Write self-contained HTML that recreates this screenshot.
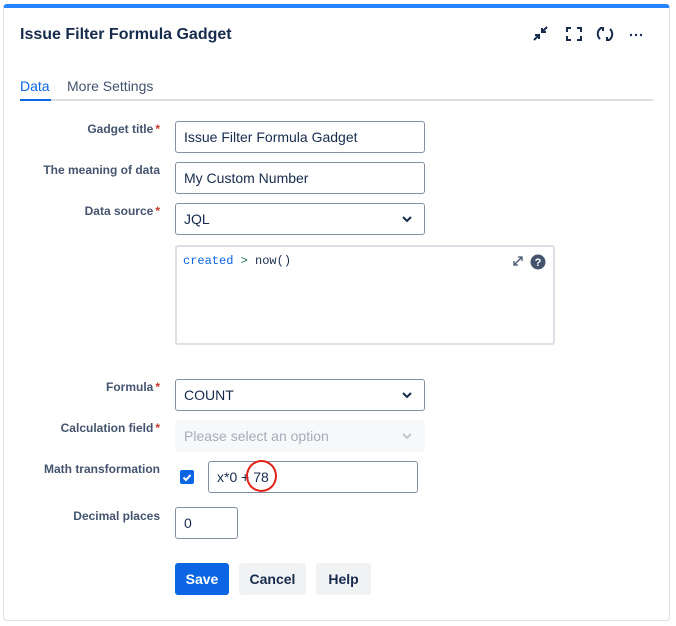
<!DOCTYPE html>
<html><head><style>
*{box-sizing:border-box;margin:0;padding:0}
body{width:676px;height:626px;background:#fff;font-family:"Liberation Sans",sans-serif;position:relative;overflow:hidden}
.card{position:absolute;left:3px;top:4px;width:667px;height:617px;border:1px solid #dcdfe4;border-top:4px solid #2684ff;border-radius:4px}
.a{position:absolute}
.title{left:20px;top:26px;font-size:16px;font-weight:bold;color:#172b4d}
.lbl{position:absolute;right:516px;font-size:12px;font-weight:bold;color:#44546f;text-align:right;white-space:nowrap}
.lbl i{font-style:normal;color:#c9372c;margin-left:2px}
.in{position:absolute;border:1px solid #8590a2;border-radius:3px;font-size:14px;color:#172b4d;padding-left:8px;display:flex;align-items:center}
.chev{position:absolute;right:12px;top:11px}
.btn{position:absolute;top:563px;height:32px;border-radius:3px;font-size:14px;font-weight:bold;display:flex;align-items:center;justify-content:center;color:#172b4d;background:#f1f2f4}
</style></head><body>
<div class="card"></div>
<div class="a title">Issue Filter Formula Gadget</div>
<svg class="a" style="left:531px;top:25px" width="120" height="18" viewBox="0 0 120 18" fill="none" stroke="#172b4d" stroke-width="2">
<path d="M3 15l5-5M4 10h4v4M16 2l-5 5M11 3v4h4"/>
<path d="M36 7V3h4M46 3h4v4M50 11v4h-4M40 15h-4v-4"/>
<path d="M70 3a7 7 0 0 0-1 11M69 3h3v3M78 15a7 7 0 0 0 1-11M79 15h-3v-3"/>
<circle cx="100" cy="10" r="1.2" fill="#172b4d" stroke="none"/><circle cx="105" cy="10" r="1.2" fill="#172b4d" stroke="none"/><circle cx="110" cy="10" r="1.2" fill="#172b4d" stroke="none"/>
</svg>
<div class="a" style="left:20px;top:78px;font-size:14px;color:#0c66e4">Data</div>
<div class="a" style="left:67px;top:78px;font-size:14px;color:#44546f">More Settings</div>
<div class="a" style="left:20px;top:99px;width:633px;height:2px;background:#dcdfe4"></div>
<div class="a" style="left:20px;top:99px;width:31px;height:2px;background:#0c66e4"></div>

<div class="lbl" style="top:122px">Gadget title<i>*</i></div>
<div class="in" style="left:175px;top:121px;width:250px;height:32px">Issue Filter Formula Gadget</div>
<div class="lbl" style="top:163px">The meaning of data</div>
<div class="in" style="left:175px;top:162px;width:250px;height:32px">My Custom Number</div>
<div class="lbl" style="top:204px">Data source<i>*</i></div>
<div class="in" style="left:175px;top:203px;width:250px;height:32px">JQL<svg class="chev" width="10" height="8"><path d="M1 2l4 4 4-4" stroke="#172b4d" stroke-width="2" fill="none"/></svg></div>
<div class="a" style="left:175px;top:245px;width:380px;height:100px;border:2px solid #dcdfe4;border-radius:3px"></div>
<div class="a" style="left:183px;top:254px;font-family:'Liberation Mono',monospace;font-size:12px;color:#172b4d"><span style="color:#0c66e4">created</span> <span style="color:#216e4e">&gt;</span> now()</div>
<svg class="a" style="left:512px;top:254px" width="36" height="16"><path d="M2 11l8-8M6 3h4v4M2 7v4h4" stroke="#44546f" stroke-width="1.3" fill="none"/><circle cx="26" cy="8" r="7.5" fill="#44546f"/><text x="26" y="12" font-size="11" font-weight="bold" fill="#fff" text-anchor="middle" font-family="Liberation Sans">?</text></svg>

<div class="lbl" style="top:380px">Formula<i>*</i></div>
<div class="in" style="left:175px;top:379px;width:250px;height:32px">COUNT<svg class="chev" width="10" height="8"><path d="M1 2l4 4 4-4" stroke="#172b4d" stroke-width="2" fill="none"/></svg></div>
<div class="lbl" style="top:421px">Calculation field<i>*</i></div>
<div class="in" style="left:175px;top:420px;width:250px;height:32px;background:#f7f8f9;border-color:#f7f8f9;color:#a5adba">Please select an option<svg class="chev" width="10" height="8"><path d="M1 2l4 4 4-4" stroke="#c1c7d0" stroke-width="2" fill="none"/></svg></div>
<div class="lbl" style="top:462px">Math transformation</div>
<div class="a" style="left:180px;top:470px;width:14px;height:14px;background:#0c66e4;border-radius:2px"><svg width="14" height="14"><path d="M3.5 7.5l2.5 2.5 4.5-5" stroke="#fff" stroke-width="2" fill="none"/></svg></div>
<div class="in" style="left:208px;top:461px;width:210px;height:32px">x*0 + 78</div>
<div class="a" style="left:246px;top:460px;width:31px;height:32px;border:2px solid #e2231a;border-radius:50%"></div>
<div class="lbl" style="top:509px">Decimal places</div>
<div class="in" style="left:175px;top:507px;width:63px;height:32px">0</div>
<div class="btn" style="left:175px;width:54px;background:#0c66e4;color:#fff">Save</div>
<div class="btn" style="left:239px;width:67px">Cancel</div>
<div class="btn" style="left:316px;width:55px">Help</div>
</body></html>
